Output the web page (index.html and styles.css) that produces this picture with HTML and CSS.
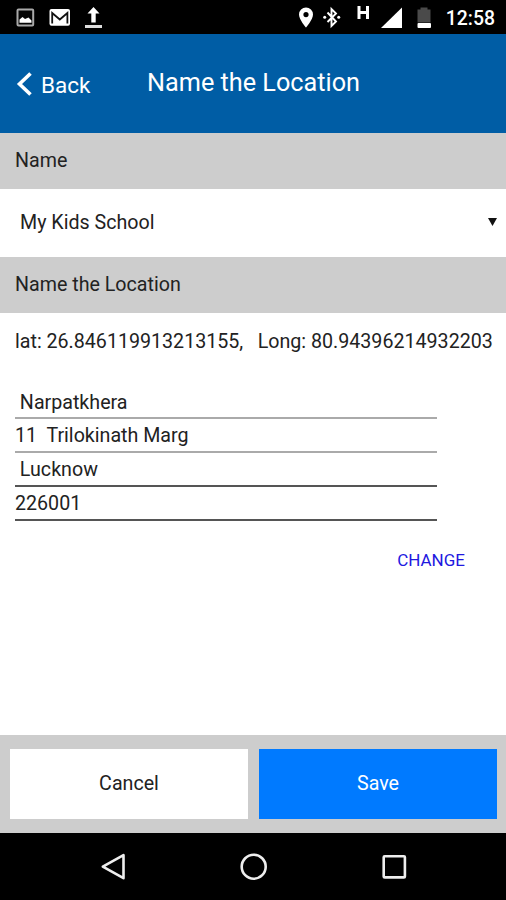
FILE: index.html
```html
<!DOCTYPE html>
<html lang="en">
<head>
<meta charset="utf-8">
<title>Name the Location</title>
<link rel="stylesheet" href="styles.css">
</head>
<body>
<div class="screen">
  <div class="status">
    <svg class="status-left" width="90" height="34" viewBox="0 0 90 34">
      <rect x="1.500" y="9.500" width="15.700" height="16" rx="1" fill="#050505" stroke="#a9a9a9" stroke-width="2"/>
      <path d="M3.500 22.700v-3.200l3-2.500 2.500 2 3.500-1.500 3 3v2.200z" fill="#fff"/>
      <rect x="33.500" y="9" width="20.500" height="16.700" rx="2" fill="#fff"/>
      <path d="M36.200 23.500V13l7.600 6.500 7.600-6.500v10.500" fill="none" stroke="#111" stroke-width="1.800"/>
      <path d="M77.500 7l6 6.500h-3.800v9h-4.400v-9h-3.800z" fill="#fff"/>
      <rect x="69" y="25" width="17" height="3" fill="#ddd"/>
    </svg>
    <div class="status-right">
      <svg width="137" height="34" viewBox="0 0 137 34">
        <path fill="#fff" fill-rule="evenodd" d="M7 7.500a7 7 0 0 0-7 7c0 5 7 13 7 13s7-8 7-13a7 7 0 0 0-7-7zm0 4.500a2.600 2.600 0 1 1 0 5.200 2.600 2.600 0 0 1 0-5.200z"/>
        <path d="M28.500 12.500l8.500 9-4.500 4.500V9l4.500 4.500-8.500 8.500" fill="none" stroke="#fff" stroke-width="1.900"/>
        <circle cx="25.700" cy="17.300" r="1.500" fill="#fff"/><circle cx="39.700" cy="17.300" r="1.500" fill="#fff"/>
        <path d="M60 6v13M68.500 6v13M60 12.500h8.500" fill="none" stroke="#fff" stroke-width="3"/>
        <path d="M103 7.500v20.500H82z" fill="#fff"/>
        <path d="M118.500 9.500h3V7.500h7v2h3v13h-13z" fill="#4a4a4a"/>
        <rect x="118.500" y="23" width="13.500" height="5" rx="1" fill="#fff"/>
      </svg>
      <span class="clock">12:58</span>
    </div>
  </div>
  <header class="header">
    <div class="back">
      <svg width="16" height="24" viewBox="0 0 16 24"><path d="M14.500 1.500L3.500 12l11 10.500" fill="none" stroke="#fff" stroke-width="3.600"/></svg>
      <span>Back</span>
    </div>
    <h1 class="title">Name the Location</h1>
  </header>
  <div class="band">Name</div>
  <div class="select">
    <span>My Kids School</span>
    <svg width="9" height="8" viewBox="0 0 9 8"><path d="M0 0h9L4.500 8z" fill="#111"/></svg>
  </div>
  <div class="band">Name the Location</div>
  <main class="content">
    <div class="coords"><span class="lat">lat: 26.846119913213155,</span><span class="long">Long: 80.94396214932203</span></div>
    <div class="address">
      <div class="line village"> Narpatkhera</div>
      <div class="line street">11  Trilokinath Marg</div>
      <div class="line city"> Lucknow</div>
      <div class="line pin">226001</div>
    </div>
    <div class="change">CHANGE</div>
  </main>
  <footer class="actions">
    <div class="button cancel">Cancel</div>
    <div class="button save">Save</div>
  </footer>
  <nav class="navbar">
    <svg width="506" height="67" viewBox="0 0 506 67" fill="none" stroke="#eee" stroke-width="2.600">
      <path d="M123.500 22.200v23L102.800 33.700z" stroke-linejoin="round"/>
      <circle cx="253.700" cy="33.700" r="12"/>
      <rect x="383.700" y="23.200" width="21.200" height="21.200" rx="1"/>
    </svg>
  </nav>
</div>
</body>
</html>
```
FILE: styles.css
```css
* { box-sizing: border-box; }
body { margin: 0; font-family: Roboto, "Liberation Sans", sans-serif; }
.screen { width: 506px; height: 900px; display: flex; flex-direction: column; background: #fff; color: #222; font-size: 19.650px; overflow: hidden; }
.screen svg { display: block; flex: none; }
.status { height: 34px; background: #000; color: #fff; display: flex; justify-content: space-between; padding: 0 11px 0 16px; flex: none; }
.status-right { display: flex; gap: 10px; }
.clock { font-size: 19.400px; font-weight: 500; line-height: 38px; }
.header { height: 98.500px; background: #005da5; color: #fff; display: flex; flex: none; }
.back { width: 147px; padding: 37px 0 0 16px; display: flex; gap: 9px; font-size: 22.500px; line-height: 28px; }
.back svg { margin-top: 0.500px; }
.title { margin: 0; padding-top: 33px; font-size: 25.250px; line-height: 32px; font-weight: 400; }
.band { height: 56px; flex: none; background: #cdcdcd; padding: 0 15px; line-height: 56px; }
.select { height: 68.500px; flex: none; display: flex; align-items: center; justify-content: space-between; padding: 0 9px 1px 20px; }
.content { flex: 1; padding: 15px 0 0 15px; }
.coords { display: flex; gap: 14.500px; line-height: 28px; white-space: nowrap; }
.address { width: 422px; margin-top: 29.500px; }
.line { height: 33.800px; line-height: 33px; white-space: pre; border-bottom: 2px solid #aaa; }
.city, .pin { border-color: #555; }
.change { width: 450px; margin-top: 26px; text-align: right; font-size: 17px; line-height: 26px; color: #2118df; }
.actions { height: 98.500px; flex: none; background: #cdcdcd; padding: 14px 9px 14px 10px; display: flex; gap: 11px; }
.button { flex: 1; background: #fff; text-align: center; line-height: 70px; }
.save { background: #007aff; color: #fff; }
.navbar { height: 67px; flex: none; background: #000; }
```
